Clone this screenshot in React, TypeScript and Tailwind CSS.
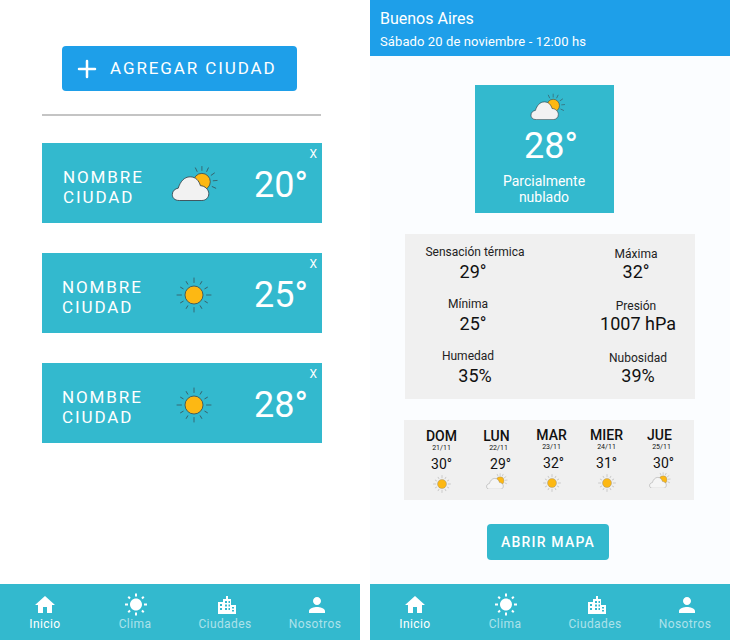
import React from 'react';
import { MdHome, MdWbSunny, MdPerson } from 'react-icons/md';

const font = { fontFamily: 'Roboto, sans-serif' };

function SunIcon({ size = 36, line = '#37474f' }: { size?: number; line?: string }) {
  const rays = [0, 30, 60, 90, 120, 150, 180, 210, 240, 270, 300, 330];
  return (
    <svg width={size} height={size} viewBox="0 0 36 36" fill="none">
      {rays.map((r) => (
        <line key={r} x1="18" y1="5.5" x2="18" y2={r % 90 === 0 ? 1 : 2.5} stroke={line} strokeWidth="0.7" strokeLinecap="round" transform={`rotate(${r} 18 18)`} />
      ))}
      <circle cx="18" cy="18" r="9" fill="#fdb813" stroke={line} strokeWidth="0.8" />
    </svg>
  );
}

function PartlyIcon({ width = 48, line = '#37474f', cloud = '#f2f2f2' }: { width?: number; line?: string; cloud?: string }) {
  const rays = [-25, 0, 25, 55, 85, 115];
  return (
    <svg width={width} height={width * 0.75} viewBox="0 0 48 36.5" fill="none">
      {rays.map((r) => (
        <line key={r} x1="31" y1="5.5" x2="31" y2="1.5" stroke={line} strokeWidth="0.7" strokeLinecap="round" transform={`rotate(${r} 31 17)`} />
      ))}
      <circle cx="31" cy="17" r="8.5" fill="#fdb813" stroke={line} strokeWidth="0.8" />
      <path
        d="M8 36 C3 36 1 33 1 30 C1 26 4 24 7 23.5 C9 17 13 12 19 12 C25 12 28 16 29.5 21 C34 21 38 25 38 29 C38 33 35 36 31 36 Z"
        fill={cloud}
        stroke={line}
        strokeWidth="0.9"
      />
    </svg>
  );
}

function CityCard({ temp, sun, nudge }: { temp: string; sun?: boolean; nudge?: boolean }) {
  return (
    <div className="relative flex items-center w-[280px] h-20 bg-[#33b9ce] text-white">
      <span className="absolute right-[5px] top-[3px] text-xs">X</span>
      <div className={`w-[117px] pt-2 text-[17px] leading-5 tracking-[1.9px] ${nudge ? 'pl-[21px]' : 'pl-5'}`}>
        NOMBRE
        <br />
        CIUDAD
      </div>
      <div className={`w-[70px] flex justify-center ${sun ? 'pt-[3px]' : 'pl-0.5'}`}>
        {sun ? <SunIcon size={36} /> : <PartlyIcon width={48} />}
      </div>
      <div className="flex-1 text-right pr-[14px] pt-1 text-4xl leading-none">{temp}</div>
    </div>
  );
}

function CityIcon() {
  return (
    <svg width="24" height="24" viewBox="0 0 24 24" fill="currentColor">
      <path fillRule="evenodd" d="M3 21V9h5V6h3V3h2v3h3v6h5v9ZM5 11v2h2v-2Zm0 4v2h2v-2Zm5-7v2h2V8Zm3.5 0v2h1.500V8ZM10 11.500v2h2v-2Zm3.500 0v2h1.500v-2ZM10 15v2h2v-2Zm3.500 0v2h1.500v-2Zm3.500-1v1.500h2V14Zm0 3v1.500h2V17Z" />
    </svg>
  );
}

function BottomNav() {
  const items = [
    { label: 'Inicio', icon: <MdHome size={24} />, active: true, shift: '' },
    { label: 'Clima', icon: <MdWbSunny size={24} />, shift: 'ml-0.5' },
    { label: 'Ciudades', icon: <CityIcon />, shift: 'ml-1' },
    { label: 'Nosotros', icon: <MdPerson size={24} />, shift: 'ml-1' },
  ];
  return (
    <nav className="grid grid-cols-4 h-14 bg-[#33b9ce] shrink-0">
      {items.map(({ label, icon, active, shift }) => (
        <div key={label} className="flex flex-col items-center pt-[9px] text-white">
          <div className={shift}>{icon}</div>
          <span className={`text-xs leading-[14px] tracking-[0.4px] ${active ? 'text-white' : 'text-white/60'}`}>{label}</span>
        </div>
      ))}
    </nav>
  );
}

function Stat({ label, value, right, labelShift = '', valueShift = '' }: { label: string; value: string; right?: boolean; labelShift?: string; valueShift?: string }) {
  return (
    <div className="flex flex-col items-center">
      <span className={`text-xs text-[#222] ${right ? 'pt-1 leading-[13px]' : 'leading-[17px]'} ${labelShift}`}>{label}</span>
      <span className={`text-lg leading-[21px] text-[#111] ${valueShift}`}>{value}</span>
    </div>
  );
}

function Day({ day, date, temp, sun, shift = '', top = '', tempShift = '' }: { day: string; date: string; temp: string; sun?: boolean; shift?: string; top?: string; tempShift?: string }) {
  return (
    <div className={`flex flex-col items-center w-[55px] text-[#111] ${top}`}>
      <span className="text-sm leading-[15px] font-medium">{day}</span>
      <span className={`text-[7px] leading-[8px] ${shift}`}>{date}</span>
      <span className={`text-sm leading-[16px] mt-[4px] mb-[4px] ${tempShift}`}>{temp}</span>
      <div className={`flex items-center justify-center h-[18px] ${sun ? '-mt-px' : '-mt-1'}`}>
        {sun ? <SunIcon size={18} line="#888" /> : <PartlyIcon width={22} line="#888" cloud="#f5f5f5" />}
      </div>
    </div>
  );
}

export default function App() {
  return (
    <div className="flex justify-between w-[730px] h-[640px] bg-white overflow-hidden" style={font}>
      {/* Lista de ciudades */}
      <div className="flex flex-col w-[360px] h-full">
        <div className="flex-1 flex flex-col pt-[46px] pl-[42px]">
          <button className="flex items-center w-[235px] h-[45px] ml-5 pl-[15px] rounded bg-[#1e9fe9] text-white">
            <svg width="20" height="20" viewBox="0 0 20 20" fill="none" stroke="white" strokeWidth="2.5" strokeLinecap="round">
              <path d="M10 2V18M2 10H18" />
            </svg>
            <span className="ml-[13px] text-[17px] tracking-[1.9px]">AGREGAR CIUDAD</span>
          </button>
          <div className="w-[279px] h-0.5 mt-[23px] mb-[27px] bg-[#c4c4c4]" />
          <div className="flex flex-col gap-[30px]">
            <CityCard temp="20°" nudge />
            <CityCard temp="25°" sun />
            <CityCard temp="28°" sun />
          </div>
        </div>
        <BottomNav />
      </div>

      {/* Detalle del clima */}
      <div className="flex flex-col w-[360px] h-full bg-[#fbfdff]">
        <header className="h-14 shrink-0 bg-[#1e9fe9] text-white pl-[10px] pt-[9px]">
          <div className="text-base leading-[20px]">Buenos Aires</div>
          <div className="text-[13px] leading-[16px] mt-[5px] tracking-[0.1px]">Sábado 20 de noviembre - 12:00 hs</div>
        </header>
        <div className="flex-1 flex flex-col items-center">
          <div className="flex flex-col items-center w-[139px] h-32 mt-[29px] -ml-3 pt-2 bg-[#33b9ce] text-white">
            <div className="ml-2">
              <PartlyIcon width={36} />
            </div>
            <div className="text-4xl leading-[38px] mt-[7px] ml-[14px]">28°</div>
            <div className="text-sm leading-4 text-center mt-2">
              Parcialmente
              <br />
              nublado
            </div>
          </div>
          <div className="grid grid-cols-[140px_114px] content-start gap-x-9 gap-y-[14px] w-[290px] h-[165px] mt-[21px] pt-[10px] bg-[#f0f0f0]">
            <Stat label="Sensación térmica" value="29°" valueShift="pr-1" />
            <Stat label="Máxima" value="32°" right labelShift="pr-1" valueShift="pr-1" />
            <Stat label="Mínima" value="25°" labelShift="pr-[14px]" valueShift="pr-1" />
            <Stat label="Presión" value="1007 hPa" right labelShift="pr-1" />
            <Stat label="Humedad" value="35%" labelShift="pr-[14px]" />
            <Stat label="Nubosidad" value="39%" right />
          </div>
          <div className="flex w-[290px] h-20 mt-[21px] -ml-0.5 pt-2 pl-[10px] bg-[#f0f0f0]">
            <Day day="DOM" date="21/11" temp="30°" sun top="mt-px" />
            <Day day="LUN" date="22/11" temp="29°" top="mt-px" shift="pl-1" tempShift="pl-2" />
            <Day day="MAR" date="23/11" temp="32°" sun tempShift="pl-1" />
            <Day day="MIER" date="24/11" temp="31°" sun />
            <Day day="JUE" date="25/11" temp="30°" top="-ml-0.5" shift="pl-1" tempShift="pl-2" />
          </div>
          <button className="w-[122px] h-9 mt-6 -ml-1 rounded bg-[#33b9ce] text-white text-sm font-medium tracking-[1.2px]">
            ABRIR MAPA
          </button>
        </div>
        <BottomNav />
      </div>
    </div>
  );
}
